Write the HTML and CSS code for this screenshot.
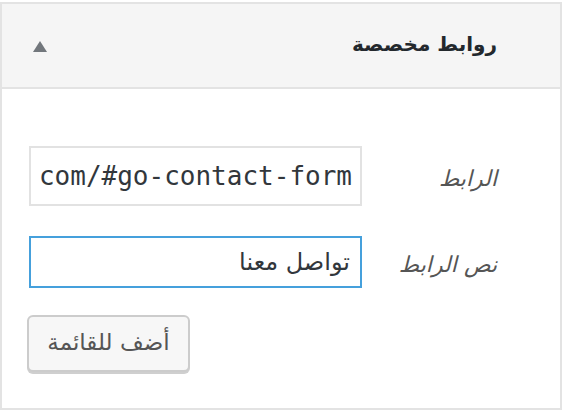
FILE: index.html
```html
<!DOCTYPE html>
<html lang="ar" dir="rtl">
<head>
<meta charset="utf-8">
<link rel="stylesheet" href="styles.css">
</head>
<body>
<div class="panel">
  <div class="panel-head">
    <h3 class="panel-title">روابط مخصصة</h3>
    <span class="toggle"></span>
  </div>
  <div class="panel-body">
    <div class="form-grid">
      <label class="field-label">الرابط</label>
      <div class="field field-url">com/#go-contact-form</div>
      <label class="field-label">نص الرابط</label>
      <div class="field field-focus">تواصل معنا</div>
    </div>
    <div class="controls">
      <button class="btn">أضف للقائمة</button>
    </div>
  </div>
</div>
</body>
</html>
```
FILE: styles.css
```css
html, body {
  margin: 0;
  padding: 0;
  background: #fff;
}
body {
  direction: rtl;
  font-family: "DejaVu Sans", sans-serif;
  color: #32373c;
}
.panel {
  margin-top: 2px;
  width: 562px;
  height: 408px;
  box-sizing: border-box;
  border: 2px solid #e3e3e3;
  display: flex;
  flex-direction: column;
}
.panel-head {
  height: 85px;
  box-sizing: border-box;
  background: #f5f5f5;
  border-bottom: 2px solid #e3e3e3;
  display: flex;
  align-items: center;
  justify-content: space-between;
  padding: 0 63px 0 31px;
}
.panel-title {
  margin: 0;
  font-size: 20px;
  font-weight: bold;
  color: #23282d;
  line-height: 1;
  padding-bottom: 4px;
}
.toggle {
  width: 0;
  height: 0;
  border-left: 7px solid transparent;
  border-right: 7px solid transparent;
  border-bottom: 11px solid #72777c;
  margin-top: 2px;
}
.panel-body {
  flex: 1;
  padding: 57px 63px 0 25px;
  display: flex;
  flex-direction: column;
}
.form-grid {
  display: grid;
  grid-template-columns: 135px 333px;
  grid-template-rows: 60px 52px;
  row-gap: 30px;
  justify-content: space-between;
  align-items: center;
  margin-left: 2px;
}
.field-label {
  font-style: italic;
  color: #555;
  font-size: 22px;
  padding-top: 4px;
}
.field {
  box-sizing: border-box;
  height: 100%;
  background: #fff;
  display: flex;
  align-items: center;
  overflow: hidden;
  white-space: nowrap;
}
.field-url {
  border: 2px solid #e2e2e2;
  direction: ltr;
  justify-content: flex-end;
  padding: 0 8px;
  font-family: "DejaVu Sans Mono", monospace;
  font-size: 26px;
  color: #32373c;
}
.field-focus {
  border: 2px solid #45a0dc;
  padding: 0 10px;
  font-size: 24px;
  color: #32373c;
}
.controls {
  display: flex;
  justify-content: flex-end;
  margin-top: 27px;
}
.btn {
  width: 163px;
  height: 57px;
  box-sizing: border-box;
  border: 2px solid #cccccc;
  border-radius: 6px;
  background: #f7f7f7;
  box-shadow: 0 2px 0 #cfcfcf;
  font-family: "DejaVu Sans", sans-serif;
  font-size: 23px;
  color: #555;
  padding: 0 0 4px;
}
```
